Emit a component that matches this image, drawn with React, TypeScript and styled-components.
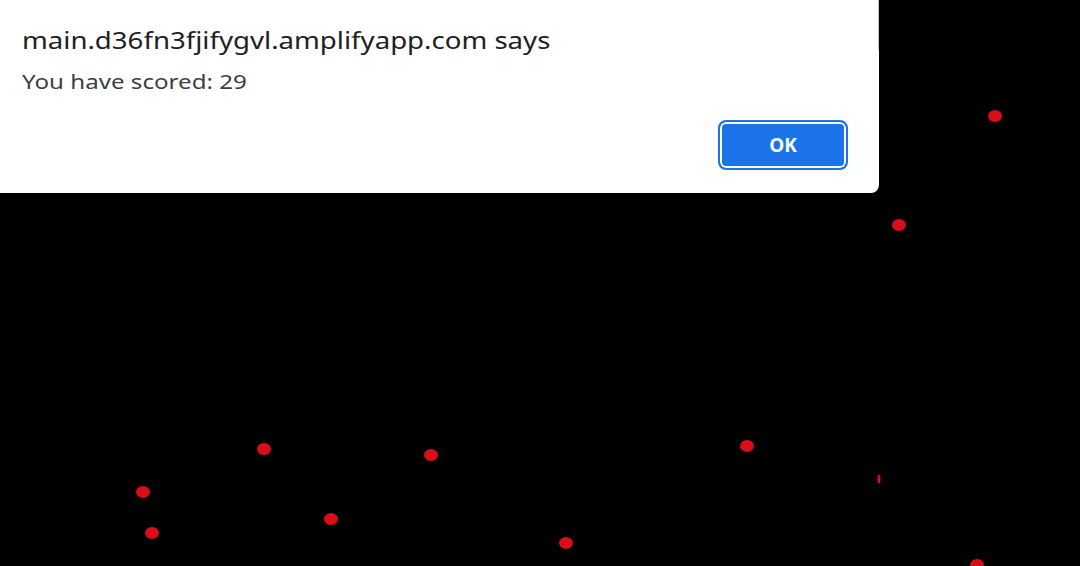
import React from 'react';
import styled, { createGlobalStyle } from 'styled-components';

const GlobalStyle = createGlobalStyle`
  html, body {
    margin: 0;
    padding: 0;
    background: #000;
    overflow: hidden;
  }
`;

const Stage = styled.div`
  position: relative;
  width: 1080px;
  height: 566px;
  background: #000;
  overflow: hidden;
`;

const Dot = styled.span<{ $w?: number; $h?: number }>`
  position: absolute;
  width: ${(p) => p.$w ?? 14}px;
  height: ${(p) => p.$h ?? 12}px;
  border-radius: 50%;
  background: #dc0c18;
  transform: translate(-50%, -50%);
`;

const Dialog = styled.div`
  position: absolute;
  top: 0;
  left: 0;
  width: 879px;
  height: 193px;
  box-sizing: border-box;
  background: #fff;
  border-bottom-right-radius: 8px;
  padding: 26px 31px 0 22px;
  display: flex;
  flex-direction: column;
  font-family: 'Noto Sans', 'Open Sans', sans-serif;
`;

const EdgeLine = styled.div`
  position: absolute;
  top: 0;
  right: 0;
  width: 1px;
  height: 50px;
  background: #c9c9c9;
`;

const Title = styled.div`
  font-size: 24px;
  line-height: 28px;
  color: #202124;
  white-space: nowrap;
  transform: scaleX(1.15);
  transform-origin: left center;
`;

const Message = styled.div`
  margin-top: 16px;
  font-size: 19px;
  line-height: 24px;
  color: #3c4043;
  white-space: nowrap;
  transform: scaleX(1.27);
  transform-origin: left center;
`;

const Footer = styled.div`
  display: flex;
  justify-content: flex-end;
  margin-top: 26px;
`;

const OkButton = styled.button`
  width: 130px;
  height: 50px;
  box-sizing: border-box;
  border: 2px solid #1a73e8;
  border-radius: 8px;
  background: #1a73e8;
  box-shadow: inset 0 0 0 2px #fff;
  color: #fff;
  font-family: 'Noto Sans', 'Open Sans', sans-serif;
  font-weight: 700;
  font-size: 19px;
  padding: 0;
`;

const dots = [
  { x: 995, y: 116 },
  { x: 899, y: 225 },
  { x: 264, y: 449 },
  { x: 431, y: 455 },
  { x: 747, y: 446 },
  { x: 143, y: 492 },
  { x: 152, y: 533 },
  { x: 331, y: 519 },
  { x: 566, y: 543 },
  { x: 977, y: 565 },
  { x: 879, y: 479, w: 3, h: 9 },
];

export default function App() {
  return (
    <>
      <GlobalStyle />
      <Stage>
        {dots.map((d, i) => (
          <Dot key={i} $w={d.w} $h={d.h} style={{ left: d.x, top: d.y }} />
        ))}
        <Dialog>
          <EdgeLine />
          <Title>main.d36fn3fjifygvl.amplifyapp.com says</Title>
          <Message>You have scored: 29</Message>
          <Footer>
            <OkButton>OK</OkButton>
          </Footer>
        </Dialog>
      </Stage>
    </>
  );
}
